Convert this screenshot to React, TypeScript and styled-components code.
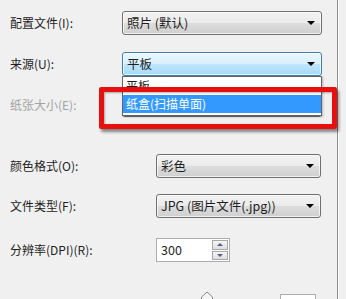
import styled, { createGlobalStyle, css } from "styled-components";

const GlobalStyle = createGlobalStyle`
  html, body {
    margin: 0;
    padding: 0;
    background: #f0f0f0;
    overflow: hidden;
  }
  body {
    font-family: "Noto Sans CJK SC", "Microsoft YaHei", sans-serif;
    font-size: 12px;
    color: #1e1e1e;
  }
`;

const Page = styled.div`
  position: relative;
  width: 346px;
  height: 299px;
  overflow: hidden;
  background: #f0f0f0;
`;

const Panel = styled.div`
  width: 327px;
  height: 299px;
  padding-left: 10px;
  border-right: 1px solid #8e8f8f;
  box-shadow: 1px 0 0 #ffffff;
  display: flex;
  flex-direction: column;
`;

const Section = styled.div<{ $top: number }>`
  display: flex;
  flex-direction: column;
  padding-top: ${(p) => p.$top}px;
`;

const Row = styled.div<{ $h: number; $col: number }>`
  height: ${(p) => p.$h}px;
  display: grid;
  grid-template-columns: ${(p) => p.$col}px 1fr;
  align-items: center;
`;

const Label = styled.span<{ $disabled?: boolean }>`
  line-height: 16px;
  color: ${(p) => (p.$disabled ? "#a3a3a3" : "#1e1e1e")};
  white-space: nowrap;
`;

const Combo = styled.div<{ $focus?: boolean; $w: number }>`
  position: relative;
  box-sizing: border-box;
  width: ${(p) => p.$w}px;
  height: 24px;
  border: 1px solid #707070;
  border-radius: 3px;
  padding-left: 4px;
  display: flex;
  align-items: center;
  background: linear-gradient(#f2f2f2 0%, #ebebeb 50%, #dddddd 51%, #cfcfcf 100%);
  box-shadow: inset 0 0 0 1px rgba(255, 255, 255, 0.7);
  ${(p) =>
    p.$focus &&
    css`
      border-color: #3c7fb1;
      background: linear-gradient(#eaf6fd 0%, #d9f0fc 50%, #bee6fd 51%, #a7d9f5 100%);
    `}
`;

const ComboText = styled.span`
  flex: 1;
  font-size: 12.5px;
  line-height: 16px;
  white-space: nowrap;
`;

const Arrow = styled.span`
  width: 0;
  height: 0;
  margin-right: 6px;
  border-left: 4px solid transparent;
  border-right: 4px solid transparent;
  border-top: 4px solid #000;
`;

const Separator = styled.div<{ $mt: number }>`
  width: 310px;
  height: 1px;
  margin-top: ${(p) => p.$mt}px;
  background: #a0a0a0;
  box-shadow: 0 1px 0 #ffffff;
`;

const DropList = styled.ul`
  position: absolute;
  left: 122px;
  top: 76px;
  width: 200px;
  height: 40px;
  box-sizing: border-box;
  margin: 0;
  padding: 0;
  list-style: none;
  background: #ffffff;
  border: 1px solid #646464;
  box-shadow: 1px 1px 2px rgba(0, 0, 0, 0.25);
`;

const DropItem = styled.li<{ $selected?: boolean }>`
  height: 18px;
  padding-left: 3px;
  font-size: 12px;
  line-height: 18px;
  white-space: nowrap;
  ${(p) =>
    p.$selected &&
    css`
      background: #3399ff;
      color: #ffffff;
    `}
`;

const Highlight = styled.div`
  position: absolute;
  left: 99px;
  top: 87px;
  width: 238px;
  height: 42px;
  box-sizing: border-box;
  border: 5px solid #e8100f;
  border-radius: 2px;
  box-shadow: 2px 3px 3px rgba(0, 0, 0, 0.45), inset 1px 1px 2px rgba(0, 0, 0, 0.3);
`;

const Spinner = styled.div`
  box-sizing: border-box;
  width: 74px;
  height: 24px;
  border: 1px solid #abadb3;
  background: #ffffff;
  display: flex;
  align-items: center;
  padding-left: 4px;
`;

const SpinValue = styled.span`
  flex: 1;
  font-size: 12.5px;
  line-height: 16px;
`;

const SpinButtons = styled.div`
  width: 16px;
  height: 20px;
  margin-right: 1px;
  display: flex;
  flex-direction: column;
  gap: 1px;
`;

const SpinButton = styled.div<{ $up?: boolean }>`
  flex: 1;
  box-sizing: border-box;
  border: 1px solid #a8a8a8;
  background: linear-gradient(#f6f6f6, #dedede);
  display: flex;
  align-items: center;
  justify-content: center;
  &::after {
    content: "";
    border-left: 3px solid transparent;
    border-right: 3px solid transparent;
    ${(p) =>
      p.$up ? "border-bottom: 3px solid #4d6185;" : "border-top: 3px solid #4d6185;"}
  }
`;

const BottomRow = styled.div`
  display: flex;
  align-items: flex-start;
  padding-top: 15px;
`;

const Thumb = styled.svg`
  margin-left: 190px;
  display: block;
`;

const ValueBox = styled.div`
  margin-left: 66px;
  margin-top: 3px;
  width: 36px;
  height: 20px;
  box-sizing: border-box;
  border: 1px solid #abadb3;
  background: #ffffff;
`;

export default function App() {
  return (
    <Page>
      <GlobalStyle />
      <Panel>
        <Section $top={2}>
          <Row $h={41} $col={112}>
            <Label>配置文件(I):</Label>
            <Combo $w={200}>
              <ComboText>照片 (默认)</ComboText>
              <Arrow />
            </Combo>
          </Row>
          <Row $h={41} $col={112}>
            <Label>来源(U):</Label>
            <Combo $w={200} $focus>
              <ComboText>平板</ComboText>
              <Arrow />
            </Combo>
          </Row>
          <Row $h={41} $col={112}>
            <Label $disabled>纸张大小(E):</Label>
            <Combo $w={200}>
              <ComboText />
              <Arrow />
            </Combo>
          </Row>
        </Section>
        <Separator $mt={8} />
        <Section $top={13}>
          <Row $h={40} $col={146}>
            <Label>颜色格式(O):</Label>
            <Combo $w={165}>
              <ComboText>彩色</ComboText>
              <Arrow />
            </Combo>
          </Row>
          <Row $h={40} $col={146}>
            <Label>文件类型(F):</Label>
            <Combo $w={165}>
              <ComboText>JPG (图片文件(.jpg))</ComboText>
              <Arrow />
            </Combo>
          </Row>
          <Row $h={48} $col={146}>
            <Label>分辨率(DPI)(R):</Label>
            <Spinner>
              <SpinValue>300</SpinValue>
              <SpinButtons>
                <SpinButton $up />
                <SpinButton />
              </SpinButtons>
            </Spinner>
          </Row>
        </Section>
        <Separator $mt={2} />
        <BottomRow>
          <Thumb width="14" height="12" viewBox="0 0 14 12">
            <path d="M1.5 12 V6 L7 1 L12.5 6 V12" fill="#f4f4f4" stroke="#8a8a8a" />
          </Thumb>
          <ValueBox />
        </BottomRow>
      </Panel>
      <DropList>
        <DropItem>平板</DropItem>
        <DropItem $selected>纸盒(扫描单面)</DropItem>
      </DropList>
      <Highlight />
    </Page>
  );
}
